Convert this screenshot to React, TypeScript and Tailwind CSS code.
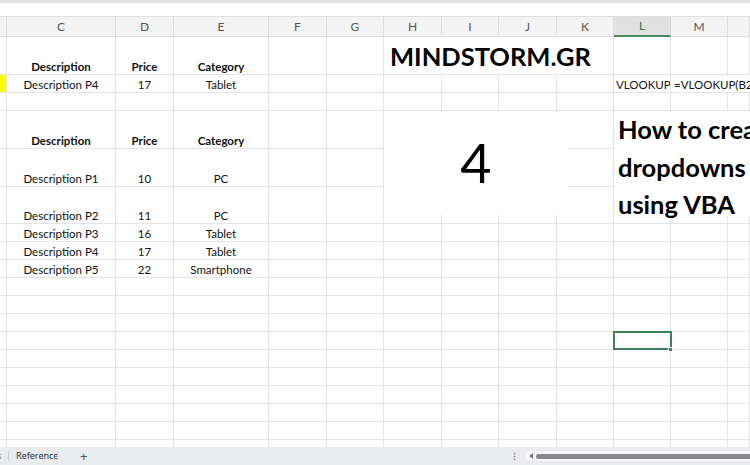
import React from 'react';

const GRID =
  'grid grid-cols-[7px_109px_58px_95px_58px_57px_58px_57px_58px_57px_57px_57px_22px] shrink-0';

const LETTERS = ['', 'C', 'D', 'E', 'F', 'G', 'H', 'I', 'J', 'K', 'L', 'M', ''];

type RowDef = { h: string; cells?: Record<number, string>; bold?: boolean };

const ROWS: RowDef[] = [
  { h: 'h-[38px]', cells: { 1: 'Description', 2: 'Price', 3: 'Category' }, bold: true },
  { h: 'h-[18px]' }, // row 2 is drawn on its own
  { h: 'h-[18px]' },
  { h: 'h-[38px]', cells: { 1: 'Description', 2: 'Price', 3: 'Category' }, bold: true },
  { h: 'h-[38px]', cells: { 1: 'Description P1', 2: '10', 3: 'PC' } },
  { h: 'h-[37px]', cells: { 1: 'Description P2', 2: '11', 3: 'PC' } },
  { h: 'h-[18px]', cells: { 1: 'Description P3', 2: '16', 3: 'Tablet' } },
  { h: 'h-[18px]', cells: { 1: 'Description P4', 2: '17', 3: 'Tablet' } },
  { h: 'h-[18px]', cells: { 1: 'Description P5', 2: '22', 3: 'Smartphone' } },
  ...Array.from({ length: 10 }, () => ({ h: 'h-[18px]' })),
];

const cellBase =
  'border-r border-b border-[#e4e4e4] flex items-end justify-center whitespace-nowrap leading-[15px] text-[11.5px] text-[#111]';

function Cell({ text, bold, className = '' }: { text?: string; bold?: boolean; className?: string }) {
  return (
    <div className={`${cellBase} overflow-hidden ${bold ? 'font-bold' : ''} ${className}`}>{text}</div>
  );
}

function ColumnHeader() {
  return (
    <div className={`${GRID} h-[20px] bg-[#f3f3f3] border-b border-[#d9d9d9]`}>
      {LETTERS.map((l, i) =>
        l === 'L' ? (
          <div
            key={i}
            className="flex items-center justify-center bg-[#e1e1e1] border-r border-[#d4d4d4] border-b-2 border-b-[#4a8a5f] text-[12px] text-[#3d7a50]"
          >
            {l}
          </div>
        ) : (
          <div
            key={i}
            className="flex items-center justify-center border-r border-[#dcdcdc] text-[12px] text-[#555]"
          >
            {l}
          </div>
        )
      )}
    </div>
  );
}

function Row1() {
  return (
    <div className={`${GRID} h-[38px]`}>
      <Cell />
      <Cell text="Description" bold />
      <Cell text="Price" bold />
      <Cell text="Category" bold />
      <Cell />
      <Cell />
      <div className="col-span-4 border-r border-b border-[#e4e4e4] flex items-end pl-[6px] pb-[2px] leading-[32px] text-[25.5px] font-bold text-black">
        MINDSTORM.GR
      </div>
      <Cell />
      <Cell />
      <Cell />
    </div>
  );
}

function Row2() {
  return (
    <div className={`${GRID} h-[18px]`}>
      <Cell className="bg-[#ffff00]" />
      <Cell text="Description P4" />
      <Cell text="17" />
      <Cell text="Tablet" />
      <Cell />
      <Cell />
      <Cell />
      <Cell />
      <Cell />
      <Cell />
      <Cell text="VLOOKUP" className="justify-start pl-[2px]" />
      <div className="border-b border-[#e4e4e4] flex items-end whitespace-nowrap leading-[15px] text-[11.5px] text-[#111] pl-[3px] relative z-10">
        =VLOOKUP(B2,
      </div>
      <div className="border-b border-[#e4e4e4]" />
    </div>
  );
}

function SheetTabs() {
  return (
    <div className="h-[18px] shrink-0 bg-[#e9ebef] flex items-center text-[9px] text-[#333] font-['Noto_Sans',sans-serif]">
      <span className="w-[8px] overflow-hidden text-[#777] -ml-[3px]">s</span>
      <div className="w-px h-[10px] bg-[#c9cbcf] ml-[3px]" />
      <span className="ml-[7px] w-[41px]">Reference</span>
      <div className="w-px h-[10px] bg-[#c9cbcf]" />
      <span className="ml-[22px] text-[13px] leading-none text-[#555]">+</span>
      <div className="flex-1" />
      <span className="text-[9px] leading-none text-[#777] mr-[7px] font-bold">⋮</span>
      <div className="w-[224px] h-[10px] rounded-l-full bg-[#f7f8fa] flex items-center pl-[3px]">
        <span className="w-0 h-0 border-y-[3px] border-y-transparent border-r-[4px] border-r-[#777]" />
        <div className="ml-[3px] flex-1 h-[5px] rounded-l-full bg-[#8a8a8a]" />
      </div>
    </div>
  );
}

export default function App() {
  return (
    <div className="relative w-[750px] h-[465px] overflow-hidden bg-white font-['Lato','Liberation_Sans',sans-serif] flex flex-col">
      <div className="h-[3px] shrink-0 bg-[#e6e6e6]" />
      <div className="h-[13px] shrink-0 bg-white" />
      <div className="h-px shrink-0 bg-[#dedede]" />
      <ColumnHeader />
      <div className="flex-1 min-h-0 overflow-hidden flex flex-col">
        {ROWS.map((r, ri) => {
          if (ri === 0) return <Row1 key={ri} />;
          if (ri === 1) return <Row2 key={ri} />;
          return (
            <div key={ri} className={`${GRID} ${r.h}`}>
              {LETTERS.map((_, ci) =>
                ri === 12 && ci === 10 ? (
                  <div key={ci} className={`${cellBase} relative z-10`}>
                    <div className="absolute -left-px -top-px w-[59px] h-[19px] border-2 border-[#3f805a]" />
                    <div className="absolute -right-[3px] -bottom-[3px] w-[5px] h-[5px] bg-[#3f805a] border border-white" />
                  </div>
                ) : (
                  <Cell key={ci} text={r.cells?.[ci]} bold={r.bold} />
                )
              )}
            </div>
          );
        })}
      </div>
      <SheetTabs />

      {/* text box with the number */}
      <div className="absolute left-[384px] top-[111px] w-[184px] h-[104px] bg-white flex items-center justify-center text-[54px] leading-none text-black">
        4
      </div>

      {/* title text box */}
      <div className="absolute left-[615px] top-[111px] w-[160px] h-[105px] bg-white pl-[3px] text-[25.5px] leading-[37.5px] font-bold text-black whitespace-nowrap">
        <div>How to create</div>
        <div>dropdowns</div>
        <div>using VBA</div>
      </div>
    </div>
  );
}
